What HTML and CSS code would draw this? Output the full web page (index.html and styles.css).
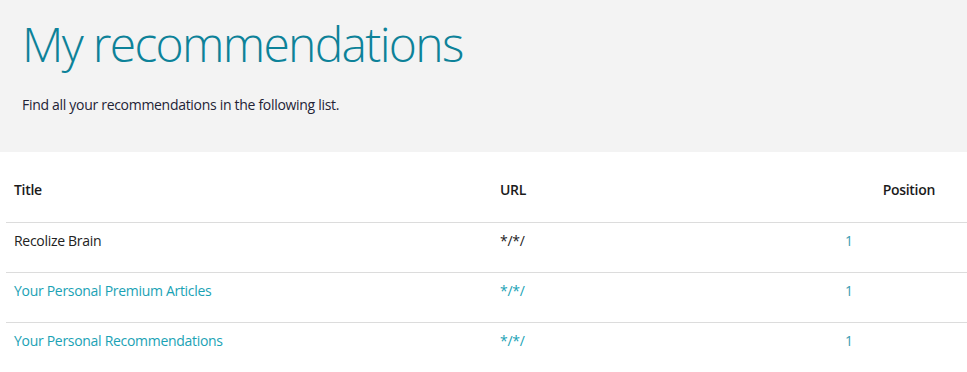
FILE: index.html
```html
<!DOCTYPE html>
<html>
<head>
<meta charset="utf-8">
<link rel="stylesheet" href="styles.css">
</head>
<body>
<header class="hero">
  <h1 class="hero-title">My recommendations</h1>
  <p class="hero-text">Find all your recommendations in the following list.</p>
</header>
<table class="rec-table">
  <colgroup>
    <col class="col-title">
    <col class="col-url">
    <col class="col-pos">
  </colgroup>
  <thead>
    <tr>
      <th>Title</th>
      <th>URL</th>
      <th class="th-pos">Position</th>
    </tr>
  </thead>
  <tbody>
    <tr>
      <td>Recolize Brain</td>
      <td>*/*/</td>
      <td class="num">1</td>
    </tr>
    <tr class="link-row">
      <td><a href="#">Your Personal Premium Articles</a></td>
      <td><a href="#">*/*/</a></td>
      <td class="num">1</td>
    </tr>
    <tr class="link-row">
      <td><a href="#">Your Personal Recommendations</a></td>
      <td><a href="#">*/*/</a></td>
      <td class="num">1</td>
    </tr>
  </tbody>
</table>
</body>
</html>
```
FILE: styles.css
```css
html, body {
  margin: 0;
  padding: 0;
  background: #fff;
  font-family: "Open Sans", "Liberation Sans", sans-serif;
  color: #222;
}
.hero {
  background: #f3f3f3;
  height: 152px;
  box-sizing: border-box;
  padding: 15px 22px 0;
}
.hero-title {
  margin: 0;
  font-weight: 300;
  font-size: 48px;
  line-height: 1.2;
  letter-spacing: -1.7px;
  color: #0d8299;
}
.hero-text {
  margin: 22px 0 0;
  font-size: 14px;
  line-height: 20px;
  letter-spacing: -0.3px;
  color: #232336;
}
.rec-table {
  margin-left: 6px;
  width: 961px;
  table-layout: fixed;
  border-collapse: collapse;
  font-size: 14px;
  line-height: 20px;
  letter-spacing: -0.3px;
}
.col-title { width: 486px; }
.col-url { width: 345px; }
.col-pos { width: 130px; }
.rec-table th {
  text-align: left;
  font-weight: 600;
  padding: 28px 8px 22px;
  color: #1b1b1b;
}
.rec-table th.th-pos {
  text-align: right;
  padding-right: 32px;
}
.rec-table td {
  border-top: 1px solid #dcdcdc;
  padding: 8px 8px 21px;
  color: #222;
}
.rec-table a {
  color: #1aa2b5;
  text-decoration: none;
}
.rec-table td.num {
  color: #3a9cb0;
}
```
